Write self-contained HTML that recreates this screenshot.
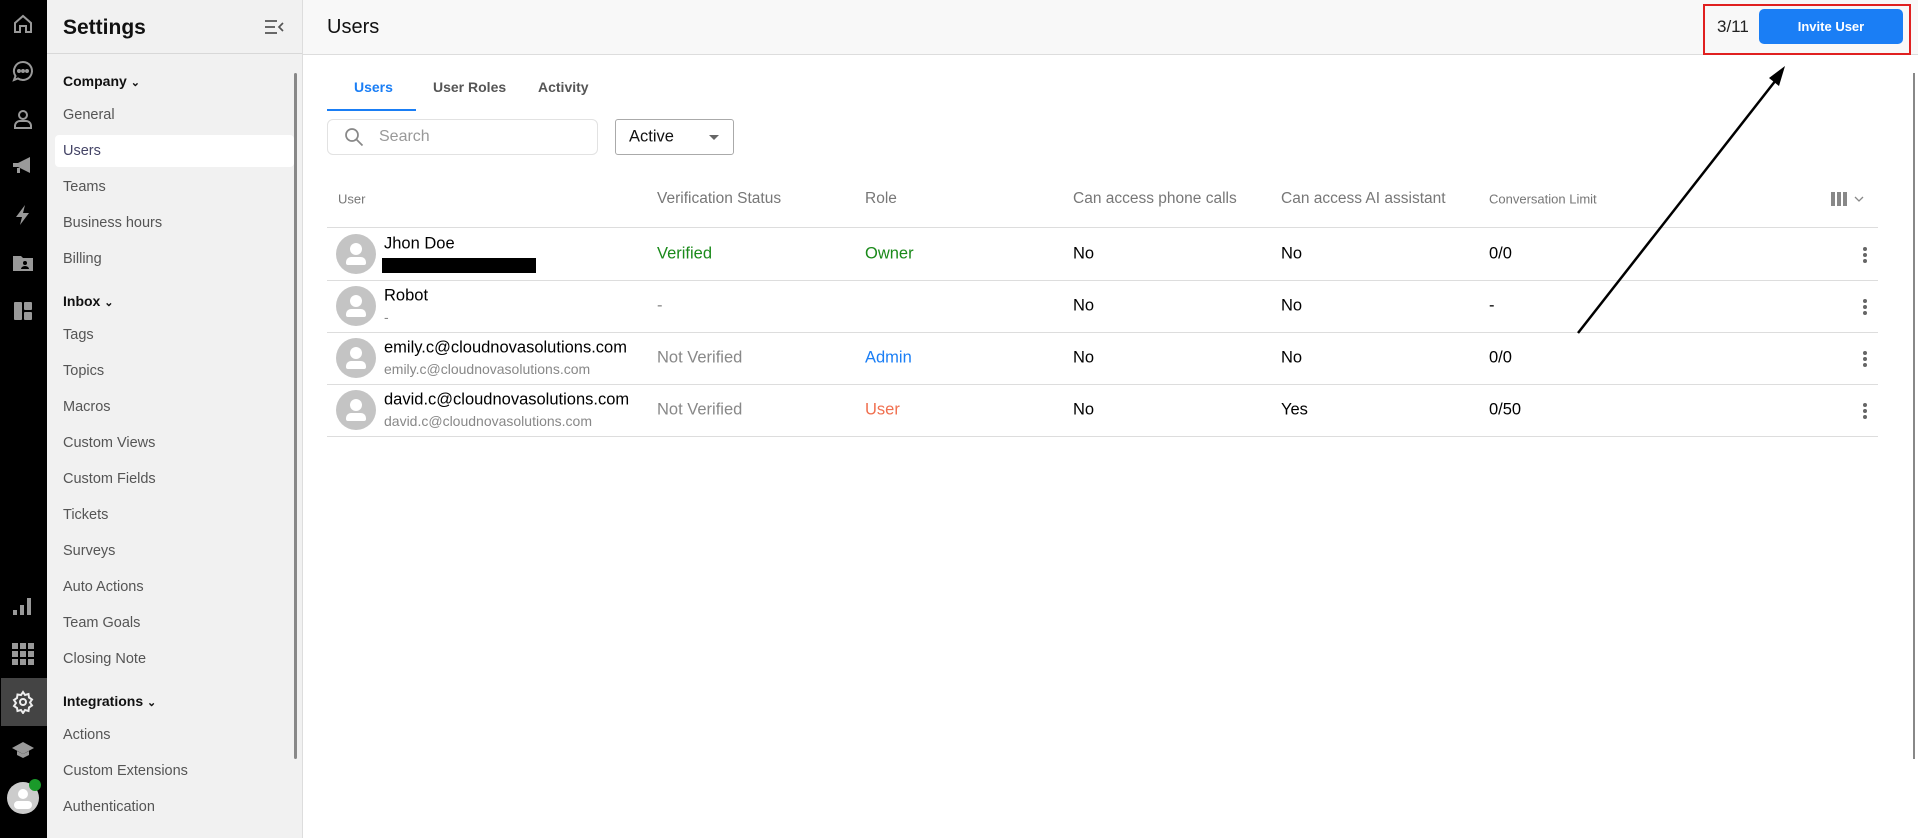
<!DOCTYPE html>
<html><head><meta charset="utf-8"><style>
*{box-sizing:border-box;margin:0;padding:0}
body{width:1918px;height:838px;overflow:hidden;font-family:"Liberation Sans",Arial,sans-serif;background:#fff;position:relative}
.rail{position:absolute;left:0;top:0;width:47px;height:838px;background:#000}
.rail svg{position:absolute;left:11px}
.side{position:absolute;left:47px;top:0;width:256px;height:838px;background:#f1f1f1;border-right:1px solid #ddd}
.side .hd{height:54px;border-bottom:1px solid #d8d8d8;position:relative}
.side .hd b{position:absolute;left:16px;top:16px;font-size:21px;color:#111}
.it{position:absolute;left:16px;font-size:14.5px;color:#555;transform:translateY(-50%)}
.sec{position:absolute;left:16px;font-size:14px;font-weight:bold;color:#111;transform:translateY(-50%)}
.sel{position:absolute;left:8px;top:135px;width:239px;height:32px;background:#fff;border-radius:4px}
.main{position:absolute;left:303px;top:0;right:0;height:838px}
.top{height:55px;background:#f8f8f8;border-bottom:1px solid #ddd;position:relative}
.abs{position:absolute}
.row{position:absolute;left:24px;width:1551px;border-top:1px solid #ddd}
.t{position:absolute;font-size:16.5px;transform:translateY(-50%);white-space:nowrap}
.h{position:absolute;font-size:15.5px;color:#777;transform:translateY(-50%);white-space:nowrap}
.av{position:absolute;left:33px;width:40px;height:40px;border-radius:50%;background:#c4c4c4;overflow:hidden}
.av:before{content:"";position:absolute;left:14px;top:9px;width:12px;height:12px;border-radius:50%;background:#fff}
.av:after{content:"";position:absolute;left:10px;top:23px;width:20px;height:8px;border-radius:5px 5px 2px 2px;background:#fff}
.keb{position:absolute;left:1560px;width:4px}
.keb i{display:block;width:4px;height:4px;border-radius:50%;background:#666;margin-bottom:2px}
</style></head><body>
<div class="rail">
<svg style="top:12px" width="24" height="24" viewBox="0 0 24 24" fill="none" stroke="#999" stroke-width="2"><path d="M4 11l8-7 8 7v9h-5v-6h-6v6H4z"/></svg>
<svg style="top:59px" width="24" height="24" viewBox="0 0 24 24" fill="none" stroke="#999" stroke-width="2"><path d="M12 3a9 9 0 1 1-5 16.5L3 21l1.5-4A9 9 0 0 1 12 3z"/><circle cx="8" cy="12" r="1" fill="#999"/><circle cx="12" cy="12" r="1" fill="#999"/><circle cx="16" cy="12" r="1" fill="#999"/></svg>
<svg style="top:107px" width="24" height="24" viewBox="0 0 24 24" fill="none" stroke="#999" stroke-width="2"><circle cx="12" cy="8" r="4"/><path d="M4 21v-2a5 5 0 0 1 5-5h6a5 5 0 0 1 5 5v2z"/></svg>
<svg style="top:154px" width="24" height="24" viewBox="0 0 24 24" fill="#999"><path d="M2 9h5l12-6v16L7 13H2zM6 14h3v5H6z"/></svg>
<svg style="top:203px" width="24" height="24" viewBox="0 0 24 24" fill="#999"><path d="M14 2L5 14h6l-2 8 9-12h-6z"/></svg>
<svg style="top:251px" width="24" height="24" viewBox="0 0 24 24" fill="#999"><path d="M2 5h8l2 2h10v13H2z"/><circle cx="14" cy="12" r="2" fill="#000"/><path d="M10 18a4 3 0 0 1 8 0z" fill="#000"/></svg>
<svg style="top:299px" width="24" height="24" viewBox="0 0 24 24" fill="#999"><rect x="3" y="3" width="8" height="18" rx="1"/><rect x="13" y="3" width="8" height="8" rx="1"/><rect x="13" y="13" width="8" height="8" rx="1"/></svg>
<svg style="top:594px" width="24" height="24" viewBox="0 0 24 24" fill="#999"><rect x="2" y="16" width="4" height="5"/><rect x="9" y="11" width="4" height="10"/><rect x="16" y="4" width="4" height="17"/></svg>
<svg style="top:642px" width="24" height="24" viewBox="0 0 24 24" fill="#999"><g><rect x="1" y="1" width="6" height="6"/><rect x="9" y="1" width="6" height="6"/><rect x="17" y="1" width="6" height="6"/><rect x="1" y="9" width="6" height="6"/><rect x="9" y="9" width="6" height="6"/><rect x="17" y="9" width="6" height="6"/><rect x="1" y="17" width="6" height="6"/><rect x="9" y="17" width="6" height="6"/><rect x="17" y="17" width="6" height="6"/></g></svg>
<div class="abs" style="left:1px;top:678px;width:46px;height:48px;background:#444"></div>
<svg style="top:690px" width="24" height="24" viewBox="0 0 24 24" fill="none" stroke="#eee" stroke-width="2"><circle cx="12" cy="12" r="3"/><path d="M12 2l2 3 3.5-1 .5 3.5 3 2-2 3 2 3-3 2-.5 3.5-3.5-1-2 3-2-3-3.5 1L6 18l-3-2 2-3-2-3 3-2 .5-3.5L10 5z"/></svg>
<svg style="top:738px" width="24" height="24" viewBox="0 0 24 24" fill="#999"><path d="M12 4L1 10l11 6 11-6z"/><path d="M6 13v4l6 3 6-3v-4l-6 3z"/></svg>
<div class="abs" style="left:7px;top:782px;width:32px;height:32px;border-radius:50%;background:#ccc;overflow:hidden"><div class="abs" style="left:11px;top:7px;width:10px;height:10px;border-radius:50%;background:#fff"></div><div class="abs" style="left:7px;top:19px;width:18px;height:8px;border-radius:5px;background:#fff"></div></div>
<div class="abs" style="left:29px;top:779px;width:12px;height:12px;border-radius:50%;background:#1a9a2a"></div>
</div>
<div class="side">
<div class="hd"><b>Settings</b>
<svg class="abs" style="left:217px;top:19px" width="20" height="16" viewBox="0 0 20 16" fill="none" stroke="#555" stroke-width="1.7"><path d="M1 2h12M1 8h10M1 14h12M19 4l-4 4 4 4"/></svg></div>
<div class="sel"></div>
<div class="abs" style="left:247px;top:73px;width:3px;height:686px;background:#888;border-radius:2px"></div>
<div class="sec" style="top:81px">Company <span style="font-size:11px">&#8964;</span></div>
<div class="it" style="top:115px">General</div>
<div class="it" style="top:151px;color:#446">Users</div>
<div class="it" style="top:187px">Teams</div>
<div class="it" style="top:223px">Business hours</div>
<div class="it" style="top:259px">Billing</div>
<div class="sec" style="top:301px">Inbox <span style="font-size:11px">&#8964;</span></div>
<div class="it" style="top:335px">Tags</div>
<div class="it" style="top:371px">Topics</div>
<div class="it" style="top:407px">Macros</div>
<div class="it" style="top:443px">Custom Views</div>
<div class="it" style="top:479px">Custom Fields</div>
<div class="it" style="top:515px">Tickets</div>
<div class="it" style="top:551px">Surveys</div>
<div class="it" style="top:587px">Auto Actions</div>
<div class="it" style="top:623px">Team Goals</div>
<div class="it" style="top:659px">Closing Note</div>
<div class="sec" style="top:701px">Integrations <span style="font-size:11px">&#8964;</span></div>
<div class="it" style="top:735px">Actions</div>
<div class="it" style="top:771px">Custom Extensions</div>
<div class="it" style="top:807px">Authentication</div>
</div>
<div class="main">
<div class="top">
<div class="abs" style="left:24px;top:16px;font-size:20px;color:#111">Users</div>
<div class="abs" style="left:1400px;top:4px;width:208px;height:51px;border:2px solid #e02020"></div>
<div class="abs" style="left:1414px;top:17px;font-size:17px;color:#222">3/11</div>
<div class="abs" style="left:1456px;top:9px;width:144px;height:35px;background:#1a7ef5;border-radius:5px;color:#fff;font-size:13px;font-weight:bold;text-align:center;line-height:35px">Invite User</div>
</div>
<div class="abs" style="left:1610px;top:73px;width:2px;height:686px;background:#888"></div>
<div class="t" style="left:51px;top:87px;font-size:14px;font-weight:bold;color:#1a7ef5">Users</div>
<div class="t" style="left:130px;top:87px;font-size:14px;font-weight:bold;color:#555">User Roles</div>
<div class="t" style="left:235px;top:87px;font-size:14px;font-weight:bold;color:#555">Activity</div>
<div class="abs" style="left:24px;top:109px;width:89px;height:2px;background:#1a7ef5"></div>
<div class="abs" style="left:24px;top:119px;width:271px;height:36px;border:1px solid #e2e2e2;border-radius:6px"></div>
<svg class="abs" style="left:41px;top:127px" width="20" height="20" viewBox="0 0 20 20" fill="none" stroke="#888" stroke-width="1.7"><circle cx="8" cy="8" r="6"/><path d="M12.5 12.5l6 6"/></svg>
<div class="t" style="left:76px;top:137px;font-size:16px;color:#999">Search</div>
<div class="abs" style="left:312px;top:119px;width:119px;height:36px;border:1px solid #aaa;border-radius:3px"></div>
<div class="t" style="left:326px;top:137px;font-size:16.5px;color:#111">Active</div>
<div class="abs" style="left:406px;top:135px;border:5px solid transparent;border-top:5px solid #666"></div>
<div class="h" style="left:35px;top:199px;font-size:13px">User</div>
<div class="h" style="left:354px;top:199px">Verification Status</div>
<div class="h" style="left:562px;top:199px">Role</div>
<div class="h" style="left:770px;top:199px">Can access phone calls</div>
<div class="h" style="left:978px;top:199px">Can access AI assistant</div>
<div class="h" style="left:1186px;top:199px;font-size:13px">Conversation Limit</div>
<svg class="abs" style="left:1528px;top:192px" width="34" height="14" viewBox="0 0 34 14" fill="#888"><rect x="0" y="0" width="4" height="14"/><rect x="6" y="0" width="4" height="14"/><rect x="12" y="0" width="4" height="14"/><path d="M24 5l4 4 4-4" stroke="#888" fill="none" stroke-width="1.3"/></svg>
<div class="row" style="top:227px"></div>
<div class="row" style="top:280px"></div>
<div class="row" style="top:332px"></div>
<div class="row" style="top:384px"></div>
<div class="row" style="top:436px"></div>
<div class="av" style="top:234px"></div>
<div class="t" style="left:81px;top:244px">Jhon Doe</div>
<div class="abs" style="left:79px;top:258px;width:154px;height:15px;background:#000"></div>
<div class="t" style="left:354px;top:254px;color:#1a8a1a">Verified</div>
<div class="t" style="left:562px;top:254px;color:#1a8a1a">Owner</div>
<div class="t" style="left:770px;top:254px">No</div><div class="t" style="left:978px;top:254px">No</div><div class="t" style="left:1186px;top:254px">0/0</div>
<div class="keb" style="top:247px"><i></i><i></i><i></i></div>
<div class="av" style="top:286px"></div>
<div class="t" style="left:81px;top:296px">Robot</div>
<div class="t" style="left:81px;top:317px;font-size:14px;color:#888">-</div>
<div class="t" style="left:354px;top:306px;color:#888">-</div>
<div class="t" style="left:770px;top:306px">No</div><div class="t" style="left:978px;top:306px">No</div><div class="t" style="left:1186px;top:306px">-</div>
<div class="keb" style="top:299px"><i></i><i></i><i></i></div>
<div class="av" style="top:338px"></div>
<div class="t" style="left:81px;top:348px">emily.c@cloudnovasolutions.com</div>
<div class="t" style="left:81px;top:369px;font-size:14px;color:#888">emily.c@cloudnovasolutions.com</div>
<div class="t" style="left:354px;top:358px;color:#888">Not Verified</div>
<div class="t" style="left:562px;top:358px;color:#1a7ef5">Admin</div>
<div class="t" style="left:770px;top:358px">No</div><div class="t" style="left:978px;top:358px">No</div><div class="t" style="left:1186px;top:358px">0/0</div>
<div class="keb" style="top:351px"><i></i><i></i><i></i></div>
<div class="av" style="top:390px"></div>
<div class="t" style="left:81px;top:400px">david.c@cloudnovasolutions.com</div>
<div class="t" style="left:81px;top:421px;font-size:14px;color:#888">david.c@cloudnovasolutions.com</div>
<div class="t" style="left:354px;top:410px;color:#888">Not Verified</div>
<div class="t" style="left:562px;top:410px;color:#f07050">User</div>
<div class="t" style="left:770px;top:410px">No</div><div class="t" style="left:978px;top:410px">Yes</div><div class="t" style="left:1186px;top:410px">0/50</div>
<div class="keb" style="top:403px"><i></i><i></i><i></i></div>
</div>
<svg class="abs" style="left:0;top:0" width="1918" height="838"><path d="M1578 333L1776 80" stroke="#000" stroke-width="2.5"/><path d="M1785 66l-16 12 10 8z" fill="#000"/></svg>
</body></html>
